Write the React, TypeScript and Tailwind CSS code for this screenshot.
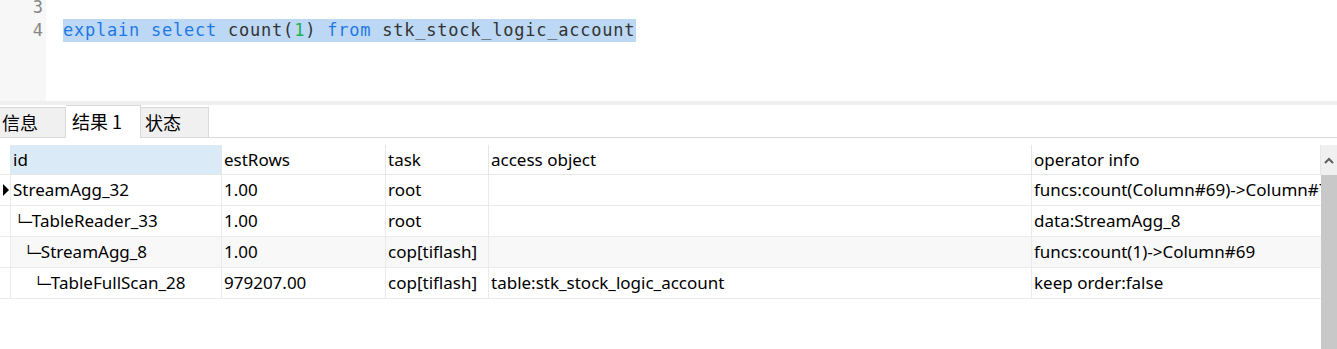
import React from "react";

const cols = [
  { key: "id", w: "w-[211px]" },
  { key: "estRows", w: "w-[164px]" },
  { key: "task", w: "w-[103px]" },
  { key: "access object", w: "w-[543px]" },
  { key: "operator info", w: "w-[289px]" },
];

type Row = { indent: number; tree: boolean; id: string; est: string; task: string; access: string; op: string };

const rows: Row[] = [
  { indent: 0, tree: false, id: "StreamAgg_32", est: "1.00", task: "root", access: "", op: "funcs:count(Column#69)->Column#71" },
  { indent: 1, tree: true, id: "TableReader_33", est: "1.00", task: "root", access: "", op: "data:StreamAgg_8" },
  { indent: 2, tree: true, id: "StreamAgg_8", est: "1.00", task: "cop[tiflash]", access: "", op: "funcs:count(1)->Column#69" },
  { indent: 3, tree: true, id: "TableFullScan_28", est: "979207.00", task: "cop[tiflash]", access: "table:stk_stock_logic_account", op: "keep order:false" },
];

const indentCls = ["pl-[2px]", "pl-[4px]", "pl-[13px]", "pl-[23px]"];

export default function App() {
  const sans = { fontFamily: '"Noto Sans", "Open Sans", sans-serif' };
  return (
    <div className="w-[1337px] h-[349px] overflow-hidden bg-white relative">
      {/* Editor */}
      <div className="flex h-[101px] overflow-hidden">
        <div
          className="w-[46px] bg-[#f7f7f7] text-[#888888] text-[17px] text-right pr-[3px] -mt-[4px]"
          style={{ fontFamily: '"DejaVu Sans Mono", monospace' }}
        >
          <div className="h-[23px] leading-[23px]">3</div>
          <div className="h-[23px] leading-[23px]">4</div>
        </div>
        <div
          className="flex-1 -mt-[4px] pl-[17px] text-[17px] tracking-[0.77px]"
          style={{ fontFamily: '"DejaVu Sans Mono", monospace' }}
        >
          <div className="h-[23px]"></div>
          <div className="h-[23px] leading-[23px] whitespace-pre">
            <span className="bg-[#bcd8f4] inline-block h-[23px] pr-[1px]">
              <span className="text-[#1f78e6]">explain</span>
              <span> </span>
              <span className="text-[#1f78e6]">select</span>
              <span className="text-[#333333]"> count(</span>
              <span className="text-[#21b04b]">1</span>
              <span className="text-[#333333]">) </span>
              <span className="text-[#1f78e6]">from</span>
              <span className="text-[#333333]"> stk_stock_logic_account</span>
            </span>
          </div>
        </div>
      </div>
      {/* separator band */}
      <div className="h-[4px] bg-[#efefef]"></div>

      {/* Tabs */}
      <div className="flex items-end h-[33px] border-b border-[#dadada]" style={{ fontFamily: '"Noto Sans CJK SC", "Noto Sans", sans-serif' }}>
        <div className="w-[66px] h-[30px] bg-[#f0f0f0] border-t border-r border-[#d9d9d9] pl-[2px] text-[18px] leading-[28px] text-black">
          信息
        </div>
        <div className="w-[75px] h-[33px] -mb-px bg-white border-t border-r border-[#d9d9d9] pl-[6px] text-[18px] leading-[30px] text-black">
          结果 1
        </div>
        <div className="w-[68px] h-[30px] bg-[#f0f0f0] border-t border-r border-[#d9d9d9] pl-[4px] text-[18px] leading-[28px] text-black">
          状态
        </div>
      </div>

      {/* Table */}
      <div className="flex mt-[7px]" style={sans}>
        <div className="w-[1321px] overflow-hidden text-[17px] text-black">
          {/* header */}
          <div className="flex h-[30px] border-b border-[#e6e6e6]">
            <div className="w-[11px] shrink-0 border-r border-[#e6e6e6]"></div>
            {cols.map((c, i) => (
              <div
                key={c.key}
                className={`${c.w} shrink-0 h-[29px] leading-[29px] pl-[2px] border-r border-[#e6e6e6] whitespace-nowrap overflow-hidden ${i === 0 ? "bg-[#dbeaf7]" : ""}`}
              >
                {c.key}
              </div>
            ))}
          </div>
          {rows.map((r, ri) => (
            <div key={ri} className="flex h-[31px] border-b border-[#ebebeb]">
              <div className="w-[11px] shrink-0 border-r border-[#ebebeb] flex items-center justify-start pl-[3px]">
                {ri === 0 && (
                  <svg width="6" height="12" viewBox="0 0 6 12">
                    <path d="M0 0 L6 6 L0 12 Z" fill="#000" />
                  </svg>
                )}
              </div>
              <div className={`flex flex-1 ${ri === 2 ? "bg-[#f8f8f8]" : ""}`}>
                <div className={`w-[211px] shrink-0 leading-[30px] ${indentCls[r.indent]} border-r border-[#ebebeb] whitespace-nowrap overflow-hidden`}>
                  {r.tree && <span className="text-[14px]" style={{ fontFamily: '"DejaVu Sans", sans-serif' }}>└─</span>}
                  {r.id}
                </div>
                <div className="w-[164px] shrink-0 leading-[30px] pl-[2px] border-r border-[#ebebeb] whitespace-nowrap">{r.est}</div>
                <div className="w-[103px] shrink-0 leading-[30px] pl-[2px] border-r border-[#ebebeb] whitespace-nowrap">{r.task}</div>
                <div className="w-[543px] shrink-0 leading-[30px] pl-[2px] border-r border-[#ebebeb] whitespace-nowrap">{r.access}</div>
                <div className="w-[289px] shrink-0 leading-[30px] pl-[2px] whitespace-nowrap overflow-hidden">{r.op}</div>
              </div>
            </div>
          ))}
        </div>
        {/* scrollbar */}
        <div className="w-[16px] h-[210px] flex flex-col">
          <div className="h-[30px] bg-[#f0f0f0] flex items-center justify-center">
            <svg width="10" height="7" viewBox="0 0 10 7">
              <path d="M1 6 L5 2 L9 6" stroke="#606060" strokeWidth="2" fill="none" />
            </svg>
          </div>
          <div className="flex-1 bg-[#c8c8c8]"></div>
        </div>
      </div>
    </div>
  );
}
